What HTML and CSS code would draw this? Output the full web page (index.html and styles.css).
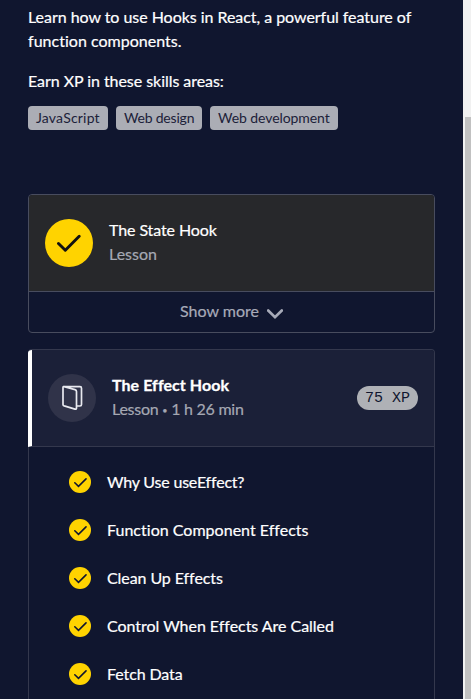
FILE: index.html
```html
<!DOCTYPE html>
<html lang="en">
<head>
<meta charset="utf-8">
<title>Learn React: Hooks</title>
<link rel="stylesheet" href="styles.css">
</head>
<body>
<svg class="symbols" aria-hidden="true">
  <symbol id="check" viewBox="0 0 24 24"><path d="M1.5 12.5 8.3 19.2 22.2 5.3"/></symbol>
</svg>
<div class="window">
  <main class="page">
    <p class="intro">Learn how to use Hooks in React, a powerful feature of<br><span class="intro-end">function components.</span></p>
    <p class="skills-title">Earn XP in these skills areas:</p>
    <ul class="tags">
      <li class="tag tag-js">JavaScript</li>
      <li class="tag tag-design">Web design</li>
      <li class="tag tag-dev">Web development</li>
    </ul>
    <section class="card">
      <header class="card-head done">
        <span class="badge badge-done"><svg><use href="#check"/></svg></span>
        <div class="titles"><h2 class="state">The State Hook</h2><p class="kind">Lesson</p></div>
      </header>
      <button class="more"><span>Show more</span><svg viewBox="0 0 16 10"><path d="M1.2 1.5 8 8.1 14.8 1.5"/></svg></button>
    </section>
    <section class="card current">
      <header class="card-head">
        <span class="badge badge-book"><svg viewBox="0 0 22 26"><path d="M2 2.5Q2 1.4 3.2 1.7L14 4.6Q15.5 5 15.5 6.5V23Q15.5 24.5 14 24.1L3.2 20.9Q2 20.5 2 19.4ZM3 1.7H19Q20.5 1.7 20.5 3.2V19.5Q20.5 21 19 21H15.5"/></svg></span>
        <div class="titles"><h2 class="effect">The Effect Hook</h2><p class="kind duration">Lesson <span class="sep">•</span> 1 h 26 min</p></div>
        <span class="xp">75 XP</span>
      </header>
      <ul class="items">
        <li><span class="dot"><svg><use href="#check"/></svg></span><span class="why">Why Use useEffect?</span></li>
        <li><span class="dot"><svg><use href="#check"/></svg></span><span class="function">Function Component Effects</span></li>
        <li><span class="dot"><svg><use href="#check"/></svg></span><span class="clean">Clean Up Effects</span></li>
        <li><span class="dot"><svg><use href="#check"/></svg></span><span class="control">Control When Effects Are Called</span></li>
        <li><span class="dot"><svg><use href="#check"/></svg></span><span class="fetch">Fetch Data</span></li>
      </ul>
    </section>
  </main>
  <div class="scrollbar"><div class="thumb"></div></div>
</div>
</body>
</html>
```
FILE: styles.css
```css
* { box-sizing: border-box; margin: 0; padding: 0; }
body {
  height: 699px;
  overflow: hidden;
  background: #10162f;
  color: #fff;
  font: 16px/24px Lato, sans-serif;
  font-variant-ligatures: none;
  -webkit-text-stroke: 0.2px;
}
ul { list-style: none; }
.symbols { display: none; }
.window { display: flex; height: 699px; overflow: hidden; }
.page { flex: 1; padding: 5px 28px 0; white-space: nowrap; }
.scrollbar { width: 8px; padding: 117px 0 0 2px; background: #f1f1f1; }
.thumb { height: 582px; background: #c1c1c1; }
.intro { margin-bottom: 16px; letter-spacing: -0.04px; }
.intro-end { letter-spacing: 0.02px; }
.skills-title { letter-spacing: -0.05px; }
.tags { display: flex; gap: 8px; margin: 13px 0 64px; }
.tag {
  height: 24px;
  padding: 0 8px;
  border-radius: 4px;
  background: #abadb5;
  color: #1c2139;
  font-size: 14px;
  -webkit-text-stroke: 0;
}
.tag-js { width: 80px; letter-spacing: 0.2px; }
.tag-design { width: 86px; letter-spacing: -0.2px; }
.tag-dev { width: 128px; letter-spacing: -0.07px; }
.card { width: 407px; border: 1px solid #484c5e; border-radius: 4px; overflow: hidden; }
.card-head { display: flex; align-items: center; height: 97px; padding: 0 16px; border-bottom: 1px solid #484c5e; }
.done { background: #27282b; }
.badge { display: grid; place-items: center; width: 48px; height: 48px; margin-right: 16px; border-radius: 50%; }
.badge-done { background: #ffd300; }
.badge svg { width: 24px; height: 24px; fill: none; stroke: #111; stroke-width: 2.9; stroke-linecap: round; stroke-linejoin: round; }
.badge-book { background: #303349; }
.badge-book svg { width: 22px; height: 26px; stroke: #e9eaf0; stroke-width: 1.7; }
.titles { margin-top: -2px; }
h2 { font-size: 16px; font-weight: 400; line-height: 24px; }
.state { letter-spacing: -0.1px; }
.kind { color: #a5a8b3; }
.duration { letter-spacing: -0.25px; }
.sep { font-size: 9px; vertical-align: 1px; line-height: 1; }
.more {
  display: flex; align-items: center; justify-content: center; gap: 8px;
  width: 100%; height: 40px; padding-bottom: 2px; border: 0; background: none; color: #a7aab8;
  font: inherit;
}
.more svg { width: 16px; height: 10px; margin-top: 5px; fill: none; stroke: currentColor; stroke-width: 2.7; stroke-linecap: round; }
.current { height: 370px; margin-top: 16px; border-left: 0; border-color: #34384d; }
.current .card-head { border-left: 4px solid #fff; border-bottom-color: #34384d; background: #1b2038; }
.effect { font-weight: 700; letter-spacing: 0.06px; -webkit-text-stroke: 0.3px; }
.xp {
  width: 61px; height: 24px; margin-left: auto; border-radius: 12px;
  background: #afb1b6; color: #10162f; text-align: center;
  font: 15px/26px "Liberation Mono", monospace;
  -webkit-text-stroke: 0;
}
.items { height: 272px; padding: 11px 0 0 40px; border-left: 1px solid #34384d; }
.items li { display: flex; align-items: center; gap: 16px; height: 48px; }
.dot { display: grid; place-items: center; width: 22px; height: 22px; border-radius: 50%; background: #ffd300; }
.dot svg { width: 13px; height: 13px; fill: none; stroke: #10162f; stroke-width: 2.9; stroke-linecap: round; }
.why { letter-spacing: -0.2px; }
.function { letter-spacing: 0.02px; }
.clean { letter-spacing: -0.08px; }
.control { letter-spacing: -0.03px; }
.fetch { letter-spacing: -0.1px; }
```
